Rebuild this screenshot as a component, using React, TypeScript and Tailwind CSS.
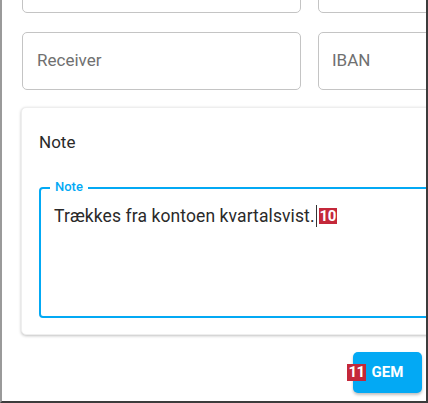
import React from "react";

export default function App() {
  return (
    <div
      className="relative w-[428px] h-[403px] overflow-hidden bg-white border-l-2 border-l-[#9a9a9a] border-r-2 border-r-[#3c3c3c] border-b-2 border-b-[#3c3c3c]"
      style={{ fontFamily: "Roboto, 'Liberation Sans', sans-serif" }}
    >
      <div className="-mt-[45px] pl-[20px] flex flex-col">
        {/* top row (partially scrolled out) */}
        <div className="flex gap-[17px]">
          <div className="shrink-0 w-[279px] h-[58px] border border-[#c4c4c4] rounded-[5px]" />
          <div className="shrink-0 w-[279px] h-[58px] border border-[#c4c4c4] rounded-[5px]" />
        </div>
        {/* second row */}
        <div className="flex gap-[17px] mt-[19px]">
          <div className="shrink-0 w-[279px] h-[58px] border border-[#c4c4c4] rounded-[5px] flex items-center px-[14px] text-[17px] text-[#707070]">
            Receiver
          </div>
          <div className="shrink-0 w-[279px] h-[58px] border border-[#c4c4c4] rounded-[5px] flex items-center px-[13px] text-[17px] text-[#707070]">
            IBAN
          </div>
        </div>
        {/* card */}
        <div className="mt-[17px] -ml-[1px] w-[600px] rounded-[5px] bg-white shadow-[0_1px_3px_rgba(0,0,0,0.25)] border border-[#eeeeee] pt-[22px] pl-[17px] pb-[16px]">
          <div className="text-[17px] leading-[24px] text-[#2a2a2a]">Note</div>
          <div className="relative mt-[33px] w-[560px] h-[131px] border-2 border-[#03a9f4] rounded-[4px] pl-[13px] pt-[15px]">
            <span className="absolute -top-[10px] left-[9px] px-[5px] bg-white text-[13px] leading-[16px] font-medium text-[#03a9f4]">
              Note
            </span>
            <div className="flex items-center text-[17.5px] tracking-[0.1px] leading-[24px] text-[#2a2a2a]">
              <span>Trækkes fra kontoen kvartalsvist.</span>
              <span className="ml-[1px] w-[1px] h-[22px] bg-[#333333]" />
              <span className="ml-[2px] h-[16px] w-[18px] bg-[#c4283a] text-white text-[15px] font-bold leading-[16px] flex items-center justify-center tracking-[-0.5px]">
                10
              </span>
            </div>
          </div>
        </div>
        {/* button */}
        <div className="flex justify-end pr-[4px] mt-[17px]">
          <div className="relative">
            <button className="w-[69px] h-[41px] rounded-[5px] bg-[#03a9f4] text-white text-[15px] font-bold shadow-[0_2px_3px_rgba(0,0,0,0.25)] flex items-center justify-center">
              GEM
            </button>
            <span className="absolute left-[-6px] top-[12px] h-[17px] w-[19px] bg-[#c4283a] text-white text-[15px] font-bold leading-[17px] flex items-center justify-center tracking-[-0.5px]">
              11
            </span>
          </div>
        </div>
      </div>
    </div>
  );
}
